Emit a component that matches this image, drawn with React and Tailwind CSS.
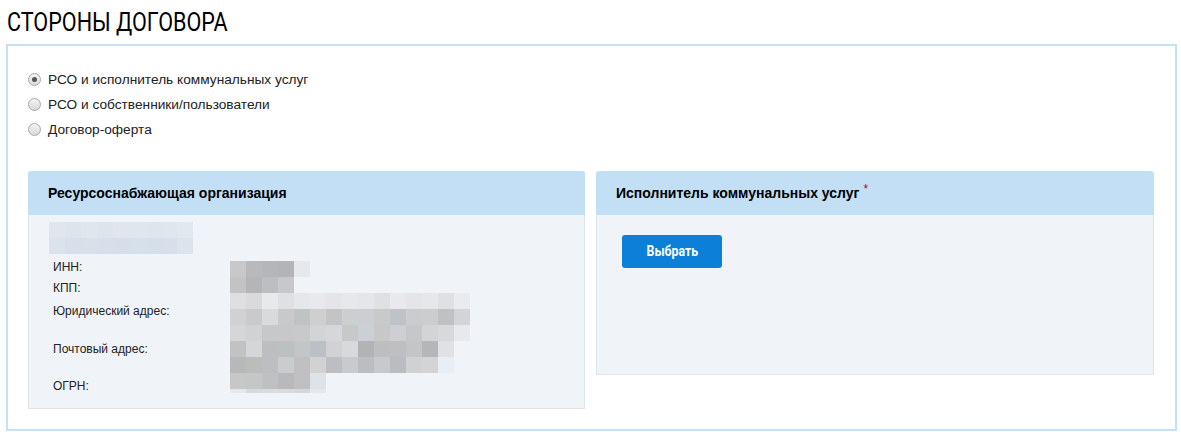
import React from "react";

const nameMosaic = [
  ["#e1e6ed", "#dee4ec", "#e0e6ed", "#dde4ec", "#e1e6ee", "#e0e6ee", "#dee5ed", "#e0e6ee", "#e2e8ef"],
  ["#dbe2eb", "#d7e0ea", "#d8e1ea", "#d7e0ea", "#d6dfe9", "#d6e0ea", "#d5dfe9", "#d7e0ea", "#dbe3ec"],
];

const valueMosaic = [
  ["#c8c8ca", "#b9b9bb", "#b5b6ba", "#b4b4b6", "#e6e8ec"],
  ["#c3c3c3", "#b5b5b7", "#bcbec2", "#c8c8cc"],
  ["#dfdfe1", "#dadadc", "#e8e9eb", "#e0e0e4", "#e6e7ea", "#e9e9eb", "#e5e5e9", "#e7e8ec", "#e6e6ea", "#dfe0e2", "#e9e9ed", "#e5e5e9", "#e6e7ea", "#dee0e3", "#eaebee"],
  ["#d1d1d3", "#c8cacb", "#d8dadc", "#c9c9cb", "#bfc4c3", "#cfcfcf", "#c2c4c6", "#cbcfd0", "#cdced2", "#c9c9c9", "#c0c3c6", "#caccce", "#cbcdcf", "#bfc1c3", "#d4d4d8"],
  ["#d6d6d8", "#d0d2d3", "#c6c8ca", "#c8c8cc", "#c8c9cb", "#d2d4d6", "#d6d7db", "#c8c8c8", "#cdcfd6", "#c8c8c8", "#cfcfd3", "#c6c7c9", "#d2d4d6", "#d7d9db", "#e8e9ed"],
  ["#c2c2c2", "#d4d6d7", "#bebdc1", "#bcc0bf", "#c2c6c7", "#bac0c4", "#d2d2d4", "#d8d9db", "#b3b3b5", "#bdbec0", "#bfbfc1", "#c4c5c7", "#b4b6b9", "#dfe1e4"],
  ["#b6b8ba", "#bcbcba", "#bcbec0", "#c9cdd0", "#c0c0c2", "#d2d2d2", "#bdbec2", "#c8cacd", "#bbbdc0", "#c8c9cd", "#b9bcc0", "#cfd1d2", "#d4d4d4", "#e8eef5"],
  ["#c7c7c7", "#c4c6c7", "#bfc0c4", "#b9b9bb", "#c0c0c2", "#dfe2e6"],
];
const lastRow = ["#e6e7e9", "#d7d9db", "#dadcde", "#dadadc", "#d5d7d9", "#e6e8eb"];

function Mosaic({ rows, size = 16 }) {
  return (
    <div className="flex flex-col">
      {rows.map((r, i) => (
        <div key={i} className="flex">
          {r.map((c, j) => (
            <div key={j} style={{ backgroundColor: c, width: size, height: size }} />
          ))}
        </div>
      ))}
    </div>
  );
}

function Radio({ checked, label }) {
  return (
    <div className="flex items-center h-[25px]">
      <span className="w-[13px] h-[13px] rounded-full border border-[#a9a9a9] bg-[linear-gradient(#f4f4f4,#d9d9d9)] flex items-center justify-center">
        {checked && <span className="w-[5px] h-[5px] rounded-full bg-[#555555]" />}
      </span>
      <span className="ml-[7px] text-[13.7px] text-[#222222] leading-[16px]">{label}</span>
    </div>
  );
}

export default function App() {
  return (
    <div className="w-[1181px] h-[444px] bg-white font-['Liberation_Sans',Arial,sans-serif] text-[#111111]">
      <div className="pl-[7px] pt-[7px] h-[44px]">
        <div className="inline-block origin-left scale-x-[0.83] whitespace-nowrap font-['Roboto',sans-serif] text-[26px] leading-[30px] text-black">
          СТОРОНЫ ДОГОВОРА
        </div>
      </div>
      <div className="ml-[6px] w-[1171px] h-[387px] border-2 border-[#c6e0f6]">
        <div className="pt-[21px] pl-[20px]">
          <Radio checked label="РСО и исполнитель коммунальных услуг" />
          <Radio label="РСО и собственники/пользователи" />
          <Radio label="Договор-оферта" />
        </div>
        <div className="mt-[29px] px-[20px] flex items-start gap-[11px]">
          {/* Left card */}
          <div className="w-[557px]">
            <div className="h-[44px] bg-[#c2dff6] rounded-t-[3px] flex items-center pl-[20px]">
              <span className="text-[14px] font-bold text-black">Ресурсоснабжающая организация</span>
            </div>
            <div className="h-[194px] bg-[#f0f4f8] border border-t-0 border-[#dde4ea]">
              <div className="pt-[7px] pl-[20px]">
                <Mosaic rows={nameMosaic} />
              </div>
              <div className="flex">
                <div className="w-[201px] pl-[24px] pt-[2px] text-[12px] text-[#222222]">
                  <div className="h-[21px] flex items-center">ИНН:</div>
                  <div className="h-[21px] flex items-center">КПП:</div>
                  <div className="h-[38px] pt-[4px]">Юридический адрес:</div>
                  <div className="h-[39px] pt-[4px]">Почтовый адрес:</div>
                  <div className="h-[21px] flex items-center">ОГРН:</div>
                </div>
                <div className="mt-[7px]">
                  <Mosaic rows={valueMosaic} />
                  <div className="flex">
                    {lastRow.map((c, j) => (
                      <div key={j} style={{ backgroundColor: c, width: 16, height: 4 }} />
                    ))}
                  </div>
                </div>
              </div>
            </div>
          </div>
          {/* Right card */}
          <div className="w-[558px]">
            <div className="h-[44px] bg-[#c2dff6] rounded-t-[3px] flex items-center pl-[20px]">
              <span className="text-[14px] font-bold text-black">Исполнитель коммунальных услуг</span>
              <span className="ml-[4px] text-[12px] text-[#cc0000] self-start mt-[13px] leading-[11px]">*</span>
            </div>
            <div className="h-[160px] bg-[#f0f4f8] border border-t-0 border-[#dde4ea] pt-[20px] pl-[25px]">
              <button className="w-[100px] h-[33px] rounded-[3px] bg-[#0c7fd9] flex items-center justify-center">
                <span className="inline-block scale-x-[0.88] text-white text-[14px] font-bold font-['Roboto',sans-serif]">
                  Выбрать
                </span>
              </button>
            </div>
          </div>
        </div>
      </div>
    </div>
  );
}
